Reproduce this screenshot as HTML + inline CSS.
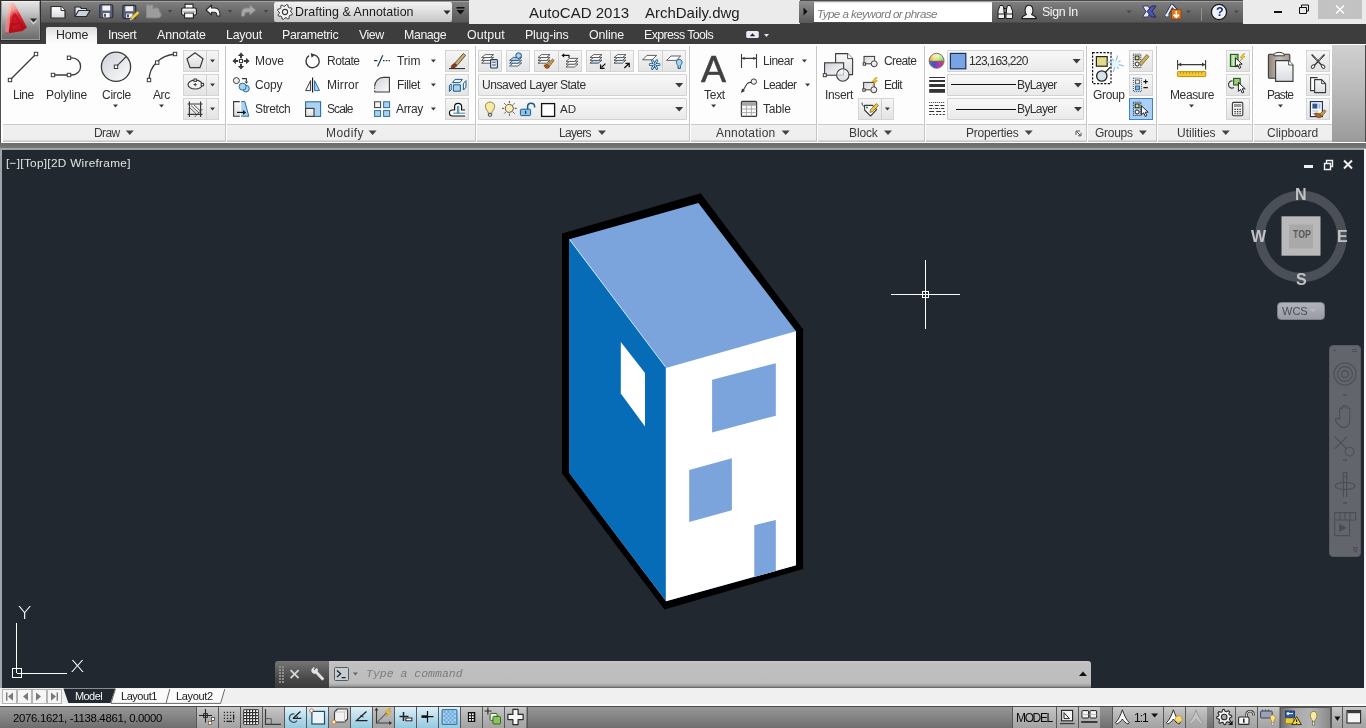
<!DOCTYPE html>
<html lang="en">
<head>
<meta charset="utf-8">
<title>AutoCAD 2013 - ArchDaily.dwg</title>
<style>
*{box-sizing:border-box;margin:0;padding:0}
html,body{width:1366px;height:728px;overflow:hidden;background:#212830}
body{position:relative;font-family:"Liberation Sans",sans-serif;font-size:12px;color:#3c3c3c}
.a{position:absolute}
.t{position:absolute;z-index:3;will-change:transform;white-space:pre;line-height:14px;font-size:12px;color:#3c3c3c}
.w{color:#f2f2f2}
svg{position:absolute;overflow:visible}
/* title bar */
#tb-dark1{left:40px;top:0;width:429px;height:24px;background:linear-gradient(#4a4a4a 0,#4a4a4a 1px,#a0a0a0 1px,#a0a0a0 2px,#7e7e7e 2px,#727272 8px,#646464 15px,#585858 22px,#3e3e3e 23px,#3a3a3a 24px)}
#tb-light1{left:469px;top:0;width:331px;height:24px;background:#ebebeb}
#tb-dark2{left:800px;top:0;width:443px;height:24px;background:linear-gradient(#4a4a4a 0,#4a4a4a 1px,#a0a0a0 1px,#a0a0a0 2px,#7e7e7e 2px,#727272 8px,#646464 15px,#585858 22px,#3e3e3e 23px,#3a3a3a 24px)}
#tb-light2{left:1243px;top:0;width:123px;height:24px;background:#ebebeb}
#appbtn{left:0;top:0;width:41px;height:41px;background:#2e2e2e}
#appbtn i{position:absolute;left:1px;top:1px;width:39px;height:39px;background:linear-gradient(#e4e4e4 0,#c4c4c4 30%,#8e8e8e 65%,#6c6c6c 100%);border:1px solid #9a9a9a;border-top-color:#f0f0f0}
#wsdrop{left:274px;top:2px;width:178px;height:20px;background:linear-gradient(#f2f2f2,#e0e0e0 45%,#c6c6c6);border-radius:2px}
#tb-play{left:799px;top:1px;width:14px;height:22px;background:linear-gradient(#8e8e8e,#5a5a5a)}
#search{left:814px;top:2px;width:178px;height:20px;background:linear-gradient(#e4e4e4 0,#fff 2px)}
#closebtn{left:1318px;top:0;width:44px;height:19px;background:#c2c2c2}
/* tab bar */
#tabs{left:0;top:24px;width:1366px;height:20px;background:#3d3d3d}
#hometab{left:46px;top:27px;width:51px;height:17px;background:linear-gradient(#dcdcdc,#f4f4f4 60%,#fdfdfd);border-radius:2px 2px 0 0}
.tab{top:27px;font-size:12.4px;color:#f4f4f4}
/* ribbon */
#ribbon{left:0;top:44px;width:1366px;height:99px;background:#fdfdfd}
#rib-right{left:1332px;top:45px;width:34px;height:97px;background:linear-gradient(#d0d0d0,#b8b8b8 50%,#9a9a9a);border-right:1.5px solid #484848}
#rib-titles{left:3px;top:124px;width:1329px;height:18px;background:linear-gradient(#cacaca 0,#cacaca 1px,#f0f0f0 1px,#eeeeee 16px,#c4c4c4 17px,#c4c4c4 18px)}
#rib-bottom{left:1px;top:142px;width:1364px;height:1px;background:#fefefe}
#rib-left{left:0;top:44px;width:2px;height:99px;background:linear-gradient(90deg,#505050 0,#505050 1px,#fff 1px)}
#rib-edge{left:0;top:143px;width:1366px;height:7px;background:linear-gradient(#6c6c6a 0,#737371 4px,#7c7c7c 5px,#a2a6aa 5px,#989ca0 7px)}
.sep{position:absolute;top:46px;width:2px;height:96px;background:linear-gradient(90deg,#c6c6c6 0,#c6c6c6 1px,#fff 1px)}
.pt{top:126px;color:#444}
.arr{position:absolute;width:0;height:0;border-left:4px solid transparent;border-right:4px solid transparent;border-top:4px solid #444}
.sarr{position:absolute;width:0;height:0;border-left:3px solid transparent;border-right:3px solid transparent;border-top:3px solid #444}
.btn{position:absolute;background:linear-gradient(#f6f6f6,#ececec 50%,#e4e4e4);border:1px solid #d4d4d4}
.btn.on{background:#abd0f5;border-color:#3f82c8}
.combo{position:absolute;background:linear-gradient(#f8f8f8,#f1f1f1 50%,#eaeaea);border:1px solid #d2d2d2;border-radius:1px}
/* canvas */
#canvas{left:0;top:150px;width:1366px;height:538px;background:#212830}
#canvas-l{left:0;top:150px;width:2px;height:538px;background:#a0a4a8}
#canvas-r{left:1364px;top:149px;width:2px;height:557px;background:#f4f4f4}
/* command line */
#cmd-d{left:275px;top:661px;width:54px;height:27px;background:linear-gradient(#767676 0,#606060 30%,#484848 65%,#3a3a3a);border-radius:3px 0 0 0}
#cmd-l{left:329px;top:661px;width:762px;height:27px;background:linear-gradient(#c8c8c8 0,#c0c0c0 3px,#bdbdbd 22px,#a0a0a0 25px,#5a5a5a 27px);border-radius:0 3px 0 0}
/* layout tabs */
#lay{left:0;top:688px;width:1366px;height:16px;background:#f0f0f0}
#layline{left:0;top:704px;width:1366px;height:2px;background:#fdfdfd}
/* status bar */
#status{left:0;top:706px;width:1366px;height:22px;background:linear-gradient(#4a4a4a 0,#4a4a4a 1px,#969696 1px,#8a8a8a 8px,#7a7a7a 16px,#6e6e6e 22px)}
.sb{position:absolute;top:707px;height:21px;width:21px;background:linear-gradient(#c8c8c8 0,#b6b6b6 40%,#a2a2a2 100%);box-shadow:-1px 0 0 #585858}
.sb.on{background:linear-gradient(#e0f0f8 0,#bfe0ee 40%,#94cadf 100%)}
</style>
</head>
<body>
<!-- ===== title bar ===== -->
<div class="a" id="tb-dark1"></div>
<div class="a" id="tb-light1"></div>
<div class="a" id="tb-dark2"></div>
<div class="a" id="tb-light2"></div>
<div class="a" id="tabs"></div>
<div class="a" id="appbtn"><i></i></div>
<div class="a" id="wsdrop"></div>
<div class="a" id="tb-play"></div>
<div class="a" id="search"></div>
<div class="a" id="closebtn"></div>
<span class="t" style="left:295.00px;top:4.6px;font-size:12.4px;line-height:15px;color:#1a1a1a;letter-spacing:0.07px">Drafting &amp; Annotation</span>
<span class="t" style="left:528.60px;top:3.9px;font-size:15px;line-height:18px;color:#1e1e1e">AutoCAD 2013    ArchDaily.dwg</span>
<span class="t" style="left:817.00px;top:7.0px;font-size:11.6px;line-height:14px;color:#7a7a7a;letter-spacing:-0.55px;font-style:italic">Type a keyword or phrase</span>
<span class="t" style="left:1041.50px;top:5.4px;font-size:12.4px;line-height:15px;color:#f4f4f4;letter-spacing:-0.39px">Sign In</span>
<!-- ===== tabs ===== -->
<div class="a" id="hometab"></div>
<span class="t" style="left:55.60px;top:28.2px;font-size:12.4px;line-height:15px;color:#2a2a2a;letter-spacing:-0.24px">Home</span>
<span class="t" style="left:108.20px;top:28.2px;font-size:12.4px;line-height:15px;color:#f4f4f4;letter-spacing:-0.48px">Insert</span>
<span class="t" style="left:157.00px;top:28.2px;font-size:12.4px;line-height:15px;color:#f4f4f4;letter-spacing:-0.09px">Annotate</span>
<span class="t" style="left:226.40px;top:28.2px;font-size:12.4px;line-height:15px;color:#f4f4f4;letter-spacing:-0.21px">Layout</span>
<span class="t" style="left:282.00px;top:28.2px;font-size:12.4px;line-height:15px;color:#f4f4f4;letter-spacing:-0.37px">Parametric</span>
<span class="t" style="left:359.40px;top:28.2px;font-size:12.4px;line-height:15px;color:#f4f4f4;letter-spacing:-0.49px">View</span>
<span class="t" style="left:404.40px;top:28.2px;font-size:12.4px;line-height:15px;color:#f4f4f4;letter-spacing:-0.41px">Manage</span>
<span class="t" style="left:467.00px;top:28.2px;font-size:12.4px;line-height:15px;color:#f4f4f4;letter-spacing:0.08px">Output</span>
<span class="t" style="left:525.20px;top:28.2px;font-size:12.4px;line-height:15px;color:#f4f4f4;letter-spacing:-0.15px">Plug-ins</span>
<span class="t" style="left:589.20px;top:28.2px;font-size:12.4px;line-height:15px;color:#f4f4f4;letter-spacing:-0.13px">Online</span>
<span class="t" style="left:644.20px;top:28.2px;font-size:12.4px;line-height:15px;color:#f4f4f4;letter-spacing:-0.60px">Express Tools</span>
<!-- title bar icons -->
<svg id="svg-title" style="left:0;top:0" width="1366" height="46" viewBox="0 0 1366 46">
<defs>
<linearGradient id="gW" x1="0" y1="0" x2="0" y2="1"><stop offset="0" stop-color="#fff"/><stop offset="1" stop-color="#d4d8dc"/></linearGradient>
<linearGradient id="gR" x1="0" y1="0" x2="1" y2="1"><stop offset="0" stop-color="#ff9a9a"/><stop offset=".45" stop-color="#e8222a"/><stop offset="1" stop-color="#a00010"/></linearGradient>
</defs>
<defs><linearGradient id="gL" x1="0" y1="0" x2="0.25" y2="1"><stop offset="0" stop-color="#f0d4cc"/><stop offset=".28" stop-color="#ee9a94"/><stop offset=".5" stop-color="#e62a34"/><stop offset="1" stop-color="#b40c1a"/></linearGradient>
<filter id="fB" x="-20%" y="-20%" width="140%" height="140%"><feGaussianBlur stdDeviation=".7"/></filter></defs>
<g filter="url(#fB)">
<path d="M9,3 L14.2,3 L27,27.6 L22.4,31 L7.4,33.6 L5.4,31.4 Z" fill="url(#gL)"/>
<path d="M8.6,2.6 L11.6,2.6 L8.6,33.6 L5,31.6 Z" fill="#f8d0c8" opacity=".55"/>
<path d="M14.4,13.6 L10.6,30.6 M14.4,13.6 L23.4,28.4 M12,24.6 L19.6,23" stroke="#a40816" stroke-width="2.2" fill="none" opacity=".55"/>
<path d="M16,17 L19.6,22.6 L13.6,23.6 Z" fill="#c01828" opacity=".8"/>
</g>
<polygon points="30,20.4 37,20.4 33.5,24.4" fill="#f4f4f4" opacity=".7"/><polygon points="30.0,18.5 37.0,18.5 33.5,22.5" fill="#2a2a2a"/>
<path d="M51,6.5 H61 L65,10.5 V18 H51 Z" fill="url(#gW)" stroke="#2c2c2c" stroke-width="1.2" stroke-linejoin="round"/><path d="M61,6.5 V10.5 H65" fill="#fff" stroke="#2c2c2c" stroke-width="1"/>
<path d="M75,16.5 V7 H80 L81.5,8.5 H86.5 V10.5" fill="#e4e8ec" stroke="#2c2c2c" stroke-width="1.2" stroke-linejoin="round"/><path d="M75,16.5 L78.5,10.5 H90 L86.5,16.5 Z" fill="#c8d2dc" stroke="#2c2c2c" stroke-width="1.2" stroke-linejoin="round"/>
<rect x="99.8" y="4.8" width="13" height="13" rx="1.2" fill="#5a607c" stroke="#2a2c3a" stroke-width="1.1"/><rect x="102.39999999999999" y="5.6" width="7.8" height="5" fill="#f2f2f4"/><rect x="103.2" y="13.0" width="6.4" height="4.4" fill="#f2f2f4"/><rect x="104.2" y="13.8" width="1.6" height="3" fill="#2a2c3a"/>
<rect x="122.8" y="5.4" width="13" height="13" rx="1.2" fill="#5a607c" stroke="#2a2c3a" stroke-width="1.1"/><rect x="125.39999999999999" y="6.2" width="7.8" height="5" fill="#f2f2f4"/><rect x="126.2" y="13.6" width="6.4" height="4.4" fill="#f2f2f4"/><rect x="127.2" y="14.4" width="1.6" height="3" fill="#2a2c3a"/>
<path d="M130.5,17.8 L137.5,11 L139.5,13 L132.6,19.8 Z" fill="#f0d24a" stroke="#8a6a10" stroke-width=".6"/><path d="M130.5,17.8 L129.6,20.6 L132.6,19.8 Z" fill="#f8f0c8" stroke="#555" stroke-width=".5"/>
<path d="M146.5,5 H153 V9 C156,6.5 160,8 159,11.5 C162,13 162,17.5 158,17.8 H146.5 Z" fill="#9c9c9c" stroke="#8a8a8a" stroke-width="1"/>
<polygon points="167.5,10 172.5,10 170,13" fill="#4a4a4a"/>
<rect x="185" y="4.2" width="8" height="4.5" fill="#fafafa" stroke="#222" stroke-width="1.1"/><rect x="181.6" y="8" width="14.8" height="7" rx="1.5" fill="#f4f4f4" stroke="#222" stroke-width="1.2"/><rect x="184.6" y="13" width="8.8" height="5" fill="#fafafa" stroke="#222" stroke-width="1.1"/><rect x="183" y="10.8" width="12" height="1.6" fill="#bbb"/>
<path d="M206,10 L211.5,5 V8 H215 C219,8 220,11 220,16 H217 C217,13.2 216.5,12.2 214,12.2 H211.5 V15 Z" fill="#f6f6f6" stroke="#2a2a2a" stroke-width="1.1" stroke-linejoin="round"/>
<polygon points="227.5,10 232.5,10 230,13" fill="#4a4a4a"/>
<path d="M255.5,10 L250,5 V8 H246.5 C242.5,8 241.5,11 241.5,16 H244.5 C244.5,13.2 245,12.2 247.5,12.2 H250 V15 Z" fill="#a8a8a8" stroke="#8c8c8c" stroke-width="1"/>
<polygon points="263.5,10 268.5,10 266,13" fill="#4a4a4a"/>
<polygon points="292.45,13.48 292.02,14.91 289.82,15.22 289.10,16.10 289.22,18.32 287.91,19.02 286.13,17.69 285.00,17.80 283.52,19.45 282.09,19.02 281.78,16.82 280.90,16.10 278.68,16.22 277.98,14.91 279.31,13.13 279.20,12.00 277.55,10.52 277.98,9.09 280.18,8.78 280.90,7.90 280.78,5.68 282.09,4.98 283.87,6.31 285.00,6.20 286.48,4.55 287.91,4.98 288.22,7.18 289.10,7.90 291.32,7.78 292.02,9.09 290.69,10.87 290.80,12.00" fill="#f4f4f4" stroke="#3a3a3a" stroke-width="1" stroke-linejoin="round"/><circle cx="285" cy="12" r="2.6" fill="none" stroke="#3a3a3a" stroke-width="1.1"/>
<polygon points="443.5,10.5 450.5,10.5 447,14.5" fill="#2a2a2a"/>
<rect x="456.5" y="7" width="8" height="1.6" fill="#111"/><polygon points="456.5,10 464.5,10 460.5,14.5" fill="#111"/>
<polygon points="803.5,7.5 803.5,15.5 807.5,11.5" fill="#111"/>
<g stroke="#1e1e1e" stroke-width="1" fill="#f0f0f0">
<path d="M998,18.5 V11 L1000,5.5 H1003 L1004.5,11 V18.5 Z"/><path d="M1006,18.5 V11 L1007.5,5.5 H1010.5 L1012.5,11 V18.5 Z"/>
<rect x="1004" y="8.5" width="2.4" height="4" fill="#888"/><path d="M998,14 H1004.5 M1006,14 H1012.5" fill="none"/></g>
<path d="M1021.6,18.6 C1022,16 1024,15.6 1026.4,14.6 C1024.4,12.8 1024.2,5.2 1029,5.2 C1033.8,5.2 1033.6,12.8 1031.6,14.6 C1034,15.6 1036,16 1036.4,18.6 Z" fill="#f2f2f2" stroke="#1e1e1e" stroke-width="1.1" stroke-linejoin="round"/>
<polygon points="1126.5,10.5 1131.5,10.5 1129,13.5" fill="#4a4a4a"/>
<path d="M1142.5,6 H1148 L1151,10.5 L1148,17 H1142.5 L1146,11.5 Z" fill="#e8e8f4" stroke="#2a2a66" stroke-width=".9"/><path d="M1156,6 H1151.5 L1147,11.5 L1151.5,17 H1156 L1152,11.5 Z" fill="#4858b0" stroke="#1a2060" stroke-width=".9"/>
<path d="M1166.5,15.5 L1172,5.5 M1172,5.5 L1176,10" stroke="#1e2a55" stroke-width="3.4" stroke-linecap="round" fill="none"/><path d="M1166.5,15.5 L1172,5.5 M1172,5.5 L1176,10" stroke="#e8ecf8" stroke-width="1.8" stroke-linecap="round" fill="none"/><circle cx="1167" cy="15" r="1.6" fill="#e8ecf8"/><rect x="1171.5" y="9.5" width="9.6" height="9.6" rx="1" fill="#e07818" stroke="#8a4408" stroke-width=".9"/><path d="M1176.3,11 V17 M1173.6,14.6 L1176.3,17.4 L1179,14.6" stroke="#fff" stroke-width="1.6" fill="none"/>
<polygon points="1186.0,10.5 1191.0,10.5 1188.5,13.5" fill="#4a4a4a"/>
<rect x="1201" y="8" width="1" height="13" fill="#909090"/>
<circle cx="1219" cy="12" r="7.6" fill="#f0f2fa" stroke="#1a1a1a" stroke-width="1.3"/>
<polygon points="1234.0,10.5 1239.0,10.5 1236.5,13.5" fill="#4a4a4a"/>
<rect x="1274" y="11" width="8" height="2" fill="#111"/>
<path d="M1299.5,7.5 H1306.5 V13.5 H1299.5 Z M1301.5,7.5 V5 H1308.5 V11 H1306.5" fill="none" stroke="#111" stroke-width="1"/>
<path d="M1336,5.5 L1344,13.5 M1344,5.5 L1336,13.5" stroke="#fff" stroke-width="1.4"/>
<rect x="746.2" y="31" width="12.6" height="7" rx="1.6" fill="#ececf4"/><polygon points="749.8,36.2 755.2,36.2 752.5,33.2" fill="#222"/><polygon points="764.0,34 769.0,34 766.5,37" fill="#e8e8e8"/>
</svg>
<span class="t" style="left:1215.60px;top:4.8px;font-size:12.5px;line-height:15px;color:#1a2a80;font-weight:bold">?</span>
<!-- ===== ribbon background ===== -->
<div class="a" id="ribbon"></div>
<div class="a" id="rib-titles"></div>
<div class="a" id="rib-right"></div>
<div class="a" id="rib-bottom"></div>
<div class="a" id="rib-edge"></div>
<div class="a" id="rib-left"></div>
<div class="sep" style="left:225px"></div>
<div class="sep" style="left:475px"></div>
<div class="sep" style="left:689px"></div>
<div class="sep" style="left:816px"></div>
<div class="sep" style="left:924px"></div>
<div class="sep" style="left:1086px"></div>
<div class="sep" style="left:1156px"></div>
<div class="sep" style="left:1252px"></div>
<span class="t" style="left:93.60px;top:125.8px;font-size:12px;line-height:14px;color:#3a3a3a;letter-spacing:-0.61px">Draw</span>
<span class="t" style="left:325.50px;top:125.8px;font-size:12px;line-height:14px;color:#3a3a3a;letter-spacing:0.45px">Modify</span>
<span class="t" style="left:559.30px;top:125.8px;font-size:12px;line-height:14px;color:#3a3a3a;letter-spacing:-0.68px">Layers</span>
<span class="t" style="left:716.20px;top:125.8px;font-size:12px;line-height:14px;color:#3a3a3a;letter-spacing:0.20px">Annotation</span>
<span class="t" style="left:849.30px;top:125.8px;font-size:12px;line-height:14px;color:#3a3a3a;letter-spacing:-0.12px">Block</span>
<span class="t" style="left:966.40px;top:125.8px;font-size:12px;line-height:14px;color:#3a3a3a;letter-spacing:-0.22px">Properties</span>
<span class="t" style="left:1095.30px;top:125.8px;font-size:12px;line-height:14px;color:#3a3a3a;letter-spacing:-0.27px">Groups</span>
<span class="t" style="left:1177.20px;top:125.8px;font-size:12px;line-height:14px;color:#3a3a3a;letter-spacing:-0.01px">Utilities</span>
<span class="t" style="left:1266.60px;top:125.8px;font-size:12px;line-height:14px;color:#3a3a3a;letter-spacing:-0.03px">Clipboard</span>
<div class="btn" style="left:183px;top:50px;width:36px;height:22px"></div>
<div class="a" style="left:206px;top:51px;width:1px;height:20px;background:#d0d0d0"></div>
<div class="btn" style="left:183px;top:74px;width:36px;height:22px"></div>
<div class="a" style="left:206px;top:75px;width:1px;height:20px;background:#d0d0d0"></div>
<div class="btn" style="left:183px;top:98px;width:36px;height:22px"></div>
<div class="a" style="left:206px;top:99px;width:1px;height:20px;background:#d0d0d0"></div>
<span class="t" style="left:12.80px;top:87.8px;font-size:12px;line-height:14px;color:#303030;letter-spacing:-0.49px">Line</span>
<span class="t" style="left:45.80px;top:87.8px;font-size:12px;line-height:14px;color:#303030;letter-spacing:-0.11px">Polyline</span>
<span class="t" style="left:101.80px;top:87.8px;font-size:12px;line-height:14px;color:#303030;letter-spacing:-0.29px">Circle</span>
<span class="t" style="left:153.40px;top:87.8px;font-size:12px;line-height:14px;color:#303030;letter-spacing:-0.40px">Arc</span>
<span class="t" style="left:255.00px;top:53.6px;font-size:12px;line-height:14px;color:#303030;letter-spacing:-0.11px">Move</span>
<span class="t" style="left:254.80px;top:77.6px;font-size:12px;line-height:14px;color:#303030;letter-spacing:-0.21px">Copy</span>
<span class="t" style="left:254.80px;top:101.6px;font-size:12px;line-height:14px;color:#303030;letter-spacing:-0.37px">Stretch</span>
<span class="t" style="left:327.00px;top:53.6px;font-size:12px;line-height:14px;color:#303030;letter-spacing:-0.47px">Rotate</span>
<span class="t" style="left:327.00px;top:77.6px;font-size:12px;line-height:14px;color:#303030;letter-spacing:0.10px">Mirror</span>
<span class="t" style="left:326.60px;top:101.6px;font-size:12px;line-height:14px;color:#303030;letter-spacing:-0.90px">Scale</span>
<span class="t" style="left:396.80px;top:53.6px;font-size:12px;line-height:14px;color:#303030;letter-spacing:-0.04px">Trim</span>
<span class="t" style="left:397.20px;top:77.6px;font-size:12px;line-height:14px;color:#303030;letter-spacing:-0.38px">Fillet</span>
<span class="t" style="left:395.60px;top:101.6px;font-size:12px;line-height:14px;color:#303030;letter-spacing:-0.37px">Array</span>
<div class="btn" style="left:445px;top:50px;width:24px;height:22px"></div>
<div class="btn" style="left:445px;top:74px;width:24px;height:22px"></div>
<div class="btn" style="left:445px;top:98px;width:24px;height:22px"></div>
<div class="btn" style="left:478px;top:50px;width:24px;height:22px"></div>
<div class="btn" style="left:506px;top:50px;width:24px;height:22px"></div>
<div class="btn" style="left:534px;top:50px;width:48px;height:22px"></div>
<div class="a" style="left:558px;top:51px;width:1px;height:20px;background:#d0d0d0"></div>
<div class="btn" style="left:586px;top:50px;width:48px;height:22px"></div>
<div class="a" style="left:610px;top:51px;width:1px;height:20px;background:#d0d0d0"></div>
<div class="btn" style="left:638px;top:50px;width:48px;height:22px"></div>
<div class="a" style="left:662px;top:51px;width:1px;height:20px;background:#d0d0d0"></div>
<div class="combo" style="left:478px;top:74px;width:209px;height:22px"></div>
<div class="combo" style="left:478px;top:98px;width:209px;height:22px"></div>
<span class="t" style="left:481.80px;top:77.6px;font-size:12px;line-height:14px;color:#303030;letter-spacing:-0.44px">Unsaved Layer State</span>
<span class="t" style="left:560.40px;top:101.8px;font-size:11.6px;line-height:14px;color:#303030">AD</span>
<span class="t" style="left:701.20px;top:46.5px;font-size:37.6px;line-height:45px;color:#404040;-webkit-text-stroke:0.5px #404040">A</span>
<span class="t" style="left:703.80px;top:87.8px;font-size:12px;line-height:14px;color:#303030;letter-spacing:-0.27px">Text</span>
<span class="t" style="left:762.80px;top:53.6px;font-size:12px;line-height:14px;color:#303030;letter-spacing:-0.47px">Linear</span>
<span class="t" style="left:762.80px;top:77.6px;font-size:12px;line-height:14px;color:#303030;letter-spacing:-0.68px">Leader</span>
<span class="t" style="left:763.00px;top:101.6px;font-size:12px;line-height:14px;color:#303030;letter-spacing:-0.17px">Table</span>
<span class="t" style="left:824.80px;top:87.8px;font-size:12px;line-height:14px;color:#303030;letter-spacing:-0.36px">Insert</span>
<span class="t" style="left:884.00px;top:53.6px;font-size:12px;line-height:14px;color:#303030;letter-spacing:-0.60px">Create</span>
<span class="t" style="left:884.20px;top:77.6px;font-size:12px;line-height:14px;color:#303030;letter-spacing:-0.70px">Edit</span>
<div class="btn" style="left:858px;top:98px;width:36px;height:22px"></div>
<div class="a" style="left:881px;top:99px;width:1px;height:20px;background:#d0d0d0"></div>
<div class="combo" style="left:947px;top:50px;width:137px;height:22px"></div>
<div class="combo" style="left:947px;top:74px;width:137px;height:22px"></div>
<div class="combo" style="left:947px;top:98px;width:137px;height:22px"></div>
<span class="t" style="left:968.60px;top:53.6px;font-size:12px;line-height:14px;color:#303030;letter-spacing:-0.73px">123,163,220</span>
<span class="t" style="left:1017.20px;top:77.6px;font-size:12px;line-height:14px;color:#303030;letter-spacing:-0.61px">ByLayer</span>
<span class="t" style="left:1017.20px;top:101.6px;font-size:12px;line-height:14px;color:#303030;letter-spacing:-0.61px">ByLayer</span>
<span class="t" style="left:1092.80px;top:87.8px;font-size:12px;line-height:14px;color:#303030;letter-spacing:-0.34px">Group</span>
<div class="btn" style="left:1129px;top:50px;width:24px;height:22px"></div>
<div class="btn" style="left:1129px;top:74px;width:24px;height:22px"></div>
<div class="btn on" style="left:1129px;top:98px;width:24px;height:22px"></div>
<span class="t" style="left:1169.80px;top:87.8px;font-size:12px;line-height:14px;color:#303030;letter-spacing:-0.38px">Measure</span>
<div class="btn" style="left:1226px;top:50px;width:24px;height:22px"></div>
<div class="btn" style="left:1226px;top:74px;width:24px;height:22px"></div>
<div class="btn" style="left:1226px;top:98px;width:24px;height:22px"></div>
<span class="t" style="left:1267.00px;top:87.8px;font-size:12px;line-height:14px;color:#303030;letter-spacing:-0.92px">Paste</span>
<div class="btn" style="left:1306px;top:50px;width:24px;height:22px"></div>
<div class="btn" style="left:1306px;top:74px;width:24px;height:22px"></div>
<div class="btn" style="left:1306px;top:98px;width:24px;height:22px"></div>
<svg id="svg-rib" style="left:0;top:0" width="1366" height="150" viewBox="0 0 1366 150">
<polygon points="125.80000000000001,130.6 133.8,130.6 129.8,135.0" fill="#444"/>
<polygon points="368.6,130.6 376.6,130.6 372.6,135.0" fill="#444"/>
<polygon points="598.0,130.6 606.0,130.6 602,135.0" fill="#444"/>
<polygon points="781.7,130.6 789.7,130.6 785.7,135.0" fill="#444"/>
<polygon points="884.0,130.6 892.0,130.6 888,135.0" fill="#444"/>
<polygon points="1024.7,130.6 1032.7,130.6 1028.7,135.0" fill="#444"/>
<polygon points="1138.9,130.6 1146.9,130.6 1142.9,135.0" fill="#444"/>
<polygon points="1221.8,130.6 1229.8,130.6 1225.8,135.0" fill="#444"/>
<polygon points="210.0,59.5 215.0,59.5 212.5,62.5" fill="#3a3a3a"/>
<polygon points="210.0,83.5 215.0,83.5 212.5,86.5" fill="#3a3a3a"/>
<polygon points="210.0,107.5 215.0,107.5 212.5,110.5" fill="#3a3a3a"/>
<polygon points="113.0,104.6 118.0,104.6 115.5,107.6" fill="#3a3a3a"/>
<polygon points="159.0,104.6 164.0,104.6 161.5,107.6" fill="#3a3a3a"/>
<defs><linearGradient id="gG" x1="0" y1="0" x2="0" y2="1"><stop offset="0" stop-color="#fafafa"/><stop offset="1" stop-color="#d9dde2"/></linearGradient><linearGradient id="gG2" x1="0" y1="0" x2="1" y2="1"><stop offset="0" stop-color="#cdd1d8"/><stop offset="1" stop-color="#fdfdfd"/></linearGradient></defs>
<path d="M10,80 L36,54" stroke="#3a3a3a" stroke-width="1.3" fill="none"/><rect x="8.3" y="78.3" width="3.4" height="3.4" fill="#fff" stroke="#3a3a3a" stroke-width="1"/><rect x="34.3" y="52.3" width="3.4" height="3.4" fill="#fff" stroke="#3a3a3a" stroke-width="1"/>
<path d="M53,75 H69 M69,57.8 H72 A8.6,8.6 0 0 1 72,75 H69" stroke="#3a3a3a" stroke-width="1.3" fill="none"/><rect x="51.3" y="73.3" width="3.4" height="3.4" fill="#fff" stroke="#3a3a3a" stroke-width="1"/><rect x="67.3" y="73.3" width="3.4" height="3.4" fill="#fff" stroke="#3a3a3a" stroke-width="1"/><rect x="67.3" y="56.099999999999994" width="3.4" height="3.4" fill="#fff" stroke="#3a3a3a" stroke-width="1"/>
<circle cx="116" cy="66.8" r="14.6" fill="url(#gG2)" stroke="#3a3a3a" stroke-width="1.3"/><path d="M116,66.8 L126.3,56.5" stroke="#3a3a3a" stroke-width="1.1"/><rect x="114.3" y="65.1" width="3.4" height="3.4" fill="#fff" stroke="#3a3a3a" stroke-width="1"/>
<path d="M149,80 C149.5,66 160,55.5 175,54" stroke="#3a3a3a" stroke-width="1.3" fill="none"/><rect x="147.3" y="78.3" width="3.4" height="3.4" fill="#fff" stroke="#3a3a3a" stroke-width="1"/><rect x="155.5" y="60.9" width="3.4" height="3.4" fill="#fff" stroke="#3a3a3a" stroke-width="1"/><rect x="173.3" y="52.3" width="3.4" height="3.4" fill="#fff" stroke="#3a3a3a" stroke-width="1"/>
<path d="M195,52.8 L203,58.8 L200,67.6 H190 L187,58.8 Z" fill="url(#gG)" stroke="#3a3a3a" stroke-width="1.2" stroke-linejoin="round"/>
<ellipse cx="195.2" cy="84.6" rx="7.2" ry="4.4" fill="#f4f4f4" stroke="#3a3a3a" stroke-width="1.2"/><rect x="194.0" y="79.0" width="2.4" height="2.4" fill="#fff" stroke="#3a3a3a" stroke-width="1"/><rect x="201.20000000000002" y="83.39999999999999" width="2.4" height="2.4" fill="#fff" stroke="#3a3a3a" stroke-width="1"/><path d="M193.6,84.6 h3.2 M195.2,83 v3.2" stroke="#3a3a3a" stroke-width="1"/>
<g stroke="#3a3a3a" fill="none"><path d="M187.5,104 H202.5 M187.5,114.4 H202.5 M189.4,101.4 V117 M200.6,101.4 V117" stroke-width="1.2"/><path d="M191,105.5 L199,113 M194,105 L200,110.6 M190,108 L196,113.6 M202.6,109 L194.6,117" stroke-width=".8"/></g>
<polygon points="430.9,59.6 435.9,59.6 433.4,62.6" fill="#3a3a3a"/>
<polygon points="430.9,83.6 435.9,83.6 433.4,86.6" fill="#3a3a3a"/>
<polygon points="430.9,107.6 435.9,107.6 433.4,110.6" fill="#3a3a3a"/>
<g fill="#3a3a3a" stroke="none"><path d="M241,52.4 l3.2,3.6 h-2.2 v2.2 h-2 v-2.2 h-2.2 z M241,69.6 l3.2,-3.6 h-2.2 v-2.2 h-2 v2.2 h-2.2 z M232.4,61 l3.6,-3.2 v2.2 h2.2 v2 h-2.2 v2.2 z M249.6,61 l-3.6,-3.2 v2.2 h-2.2 v2 h2.2 v2.2 z"/></g><rect x="239.5" y="59.5" width="3" height="3" fill="#fff" stroke="#3a3a3a" stroke-width="1"/>
<circle cx="236.4" cy="80.6" r="3" fill="#f0f0f0" stroke="#3a3a3a" stroke-width="1"/><path d="M242,78.6 h4.4 v3" stroke="#3a3a3a" stroke-width="1.1" fill="none"/><path d="M244.6,81.4 h3.6 l-1.8,2.4 z" fill="#3a3a3a"/><circle cx="246" cy="88.6" r="3.3" fill="#a9d3f0" stroke="#2b6f9e" stroke-width="1"/><circle cx="242.6" cy="86.6" r="3.5" fill="#a9d3f0" stroke="#2b6f9e" stroke-width="1"/>
<path d="M241.2,101.6 H244.8 L248.8,116.2 H241.2" fill="#a9d3f0" stroke="#2b6f9e" stroke-width="1"/><path d="M239.8,101.6 H233.6 V116.2 H239.8" fill="url(#gG)" stroke="#3a3a3a" stroke-width="1.1"/><path d="M237,112.4 H243.4" stroke="#111" stroke-width="1.2"/><path d="M243,110 l3.2,2.4 l-3.2,2.4 z" fill="#111"/>
<path d="M314.4,54.8 A6.6,6.6 0 1 1 309,55.6" fill="none" stroke="#3a3a3a" stroke-width="1.4"/><path d="M310.6,53 l4.6,1.8 l-3.6,3 z" fill="#3a3a3a"/>
<path d="M310.6,80.6 V90.6 H305.6 Z" fill="#f8f8f8" stroke="#3a3a3a" stroke-width="1"/><path d="M314.6,80.6 V90.6 H319.6 Z" fill="#a9d3f0" stroke="#2b6f9e" stroke-width="1"/><path d="M312.6,77.4 V92.6" stroke="#111" stroke-width="1.1"/>
<rect x="305.6" y="101.8" width="15" height="14.6" fill="#a9d3f0" stroke="#2b6f9e" stroke-width="1.1"/><rect x="305.6" y="108.4" width="8.4" height="8" fill="url(#gG)" stroke="#3a3a3a" stroke-width="1.1"/>
<path d="M374,60.6 h3.4 M383,60.6 h1.6 M385.8,60.6 h1.6 M388.6,60.6 h1.4" stroke="#1f3e5c" stroke-width="1.1"/><path d="M377.6,66.6 L382.8,55.2" stroke="#1f3e5c" stroke-width="1.2"/>
<path d="M374.6,86 A9,9 0 0 1 383.6,77.4 H389.4 V92 H374.6 Z" fill="url(#gG2)" stroke="none"/><path d="M374.6,86.4 A9,9 0 0 1 383.6,77.4 H389.4 V92 H374.6" fill="none" stroke="#3a3a3a" stroke-width="1.1"/><path d="M374.6,92 V90.4 M374.6,88.8 V87.4" stroke="#3a3a3a" stroke-width="1.1"/>
<rect x="374.6" y="101.8" width="6" height="5.8" fill="#f4f2f4" stroke="#3a3a3a" stroke-width="1"/><rect x="383.6" y="101.8" width="6" height="5.8" fill="#a9d3f0" stroke="#2b6f9e" stroke-width="1"/><rect x="374.6" y="110.6" width="6" height="5.8" fill="#a9d3f0" stroke="#2b6f9e" stroke-width="1"/><rect x="383.6" y="110.6" width="6" height="5.8" fill="#a9d3f0" stroke="#2b6f9e" stroke-width="1"/>
<path d="M449,68.6 H465" stroke="#222" stroke-width="1"/><path d="M454.6,63.4 L463.4,53.4 L465.6,55.4 L457,65.6 Z" fill="#c8ac74" stroke="#4a3a20" stroke-width=".8"/><path d="M454.6,63.4 L457,65.6 C455.4,67.6 452.6,68.4 451.4,67.6 C450.8,66.4 452,64.4 454.6,63.4 Z" fill="#8a3c18" stroke="#4a200c" stroke-width=".7"/>
<g fill="#eaf4fb" stroke="#1c5c8c" stroke-width="1" stroke-linejoin="round"><path d="M452.4,82.6 l2.6,-3.2 h7.4 l-2.6,3.2 z"/><path d="M463.4,83.4 l2.6,-2.8 v6.6 l-2.6,2.8 z"/><path d="M449.4,85.4 l1.8,-1.4 v6 l-1.8,1.4 z"/><rect x="453.4" y="84.8" width="7" height="6.4" fill="#a9d3f0"/></g>
<path d="M465,116 H452.6 C448.4,116 448.4,110 452.6,110 H454.6 V106.8 C454.6,102.2 461.6,102.2 461.6,106.8 V110 H465" fill="#fff" stroke="#111" stroke-width="1.2"/><path d="M465,113.2 H453.2 M457.4,113 V107 C457.4,105.8 458.8,105.8 458.8,107 V113" fill="none" stroke="#2b6f9e" stroke-width=".9"/>
<polygon points="675.2,83 683.2,83 679.2,87.4" fill="#3a3a3a"/>
<polygon points="675.2,107 683.2,107 679.2,111.4" fill="#3a3a3a"/>
<path d="M481.6,63.2 l3.6,-3 h8.4 l-3.6,3 z" fill="#fff" stroke="#444" stroke-width="0.85" stroke-linejoin="round"/><path d="M481.6,60.4 l3.6,-3 h8.4 l-3.6,3 z" fill="#fff" stroke="#444" stroke-width="0.85" stroke-linejoin="round"/><path d="M481.6,57.6 l3.6,-3 h8.4 l-3.6,3 z" fill="#fff" stroke="#444" stroke-width="0.85" stroke-linejoin="round"/><rect x="490.6" y="59.6" width="6.8" height="8.4" rx="1" fill="#e8eef6" stroke="#22365a" stroke-width="1.1"/><path d="M492.2,62.2 h3.6 M492.2,65 h3.6" stroke="#22365a" stroke-width=".9"/>
<path d="M509.6,66.0 l3.6,-3 h8.4 l-3.6,3 z" fill="#fff" stroke="#2a4a66" stroke-width="0.85" stroke-linejoin="round"/><path d="M509.6,63.199999999999996 l3.6,-3 h8.4 l-3.6,3 z" fill="#d6eaf8" stroke="#2a4a66" stroke-width="0.85" stroke-linejoin="round"/><path d="M509.6,60.4 l3.6,-3 h8.4 l-3.6,3 z" fill="#a9d3f0" stroke="#2a4a66" stroke-width="0.85" stroke-linejoin="round"/><circle cx="518.6" cy="55.6" r="2.8" fill="#a9d3f0" stroke="#1c4c74" stroke-width="1"/>
<path d="M538,63.2 l3.6,-3 h8.4 l-3.6,3 z" fill="#fff" stroke="#444" stroke-width="0.85" stroke-linejoin="round"/><path d="M538,60.4 l3.6,-3 h8.4 l-3.6,3 z" fill="#fff" stroke="#444" stroke-width="0.85" stroke-linejoin="round"/><path d="M538,57.6 l3.6,-3 h8.4 l-3.6,3 z" fill="#fff" stroke="#444" stroke-width="0.85" stroke-linejoin="round"/><path d="M546.6,64.8 L552.6,59 L554,60.6 L549,67 Z" fill="#c89a4c" stroke="#6a4414" stroke-width=".7"/><path d="M544,65.4 C546,64 548.6,64.4 549.4,67 C548,69.2 545,68.6 544,65.4 Z" fill="#a85a1c" stroke="#5a2a0c" stroke-width=".6"/>
<path d="M566,67.0 l3.6,-3 h8.4 l-3.6,3 z" fill="#fff" stroke="#444" stroke-width="0.85" stroke-linejoin="round"/><path d="M566,64.19999999999999 l3.6,-3 h8.4 l-3.6,3 z" fill="#fff" stroke="#444" stroke-width="0.85" stroke-linejoin="round"/><path d="M566,61.4 l3.6,-3 h8.4 l-3.6,3 z" fill="#fff" stroke="#444" stroke-width="0.85" stroke-linejoin="round"/><path d="M563.6,55.4 h5.4 v2.6" fill="none" stroke="#111" stroke-width="1.1"/><path d="M561.4,55.4 l2.8,-2.2 v4.4 z" fill="#111"/>
<path d="M590,63.2 l3.6,-3 h8.4 l-3.6,3 z" fill="#a9d3f0" stroke="#444" stroke-width="0.85" stroke-linejoin="round"/><path d="M590,60.4 l3.6,-3 h8.4 l-3.6,3 z" fill="#fff" stroke="#444" stroke-width="0.85" stroke-linejoin="round"/><path d="M590,57.6 l3.6,-3 h8.4 l-3.6,3 z" fill="#fff" stroke="#444" stroke-width="0.85" stroke-linejoin="round"/><path d="M605.4,63.6 L601.6,67.4 M600.6,64.4 V68.4 H604.6" stroke="#111" stroke-width="1.3" fill="none"/>
<path d="M614,63.2 l3.6,-3 h8.4 l-3.6,3 z" fill="#d6eaf8" stroke="#444" stroke-width="0.85" stroke-linejoin="round"/><path d="M614,60.4 l3.6,-3 h8.4 l-3.6,3 z" fill="#eef6fc" stroke="#444" stroke-width="0.85" stroke-linejoin="round"/><path d="M614,57.6 l3.6,-3 h8.4 l-3.6,3 z" fill="#fff" stroke="#444" stroke-width="0.85" stroke-linejoin="round"/><path d="M624.4,68 L628.4,64 M625.4,63.4 H629.2 V67.2" stroke="#111" stroke-width="1.3" fill="none"/>
<path d="M642.6,59.8 l4.4,-4.4 h9.6 l-4.4,4.4 z" fill="#fff" stroke="#444" stroke-width="0.85" stroke-linejoin="round"/><path d="M655.8,64.6 L659.2,64.6 M655.2,65.6 L656.9,68.6 M654.0,65.6 L652.3,68.6 M653.4,64.6 L650.0,64.6 M654.0,63.6 L652.3,60.6 M655.2,63.6 L656.9,60.6 " stroke="#1c5c8c" stroke-width="2.6" stroke-linecap="round" fill="none"/><path d="M655.8,64.6 L659.2,64.6 M655.2,65.6 L656.9,68.6 M654.0,65.6 L652.3,68.6 M653.4,64.6 L650.0,64.6 M654.0,63.6 L652.3,60.6 M655.2,63.6 L656.9,60.6 " stroke="#e6f4fc" stroke-width="1" stroke-linecap="round" fill="none"/>
<path d="M666.6,60.4 l4.4,-4.4 h9.6 l-4.4,4.4 z" fill="#fff" stroke="#444" stroke-width="0.85" stroke-linejoin="round"/><path d="M678,68.4 V65.4 C675.4,63.4 676,59.4 679.2,59.4 C682.4,59.4 683,63.4 680.4,65.4 V68.4 Z" fill="#a9d3f0" stroke="#1c5c8c" stroke-width="1"/>
<path d="M488.4,113.4 C488,110.6 485.4,109.6 485.4,106.4 C485.4,103.6 487.6,102 490,102 C492.4,102 494.6,103.6 494.6,106.4 C494.6,109.6 492,110.6 491.6,113.4 Z" fill="#f6eaa6" stroke="#8a7a3a" stroke-width=".9"/><rect x="488.4" y="113.4" width="3.2" height="2.8" rx=".8" fill="#ddd" stroke="#333" stroke-width=".9"/>
<circle cx="509.4" cy="108.4" r="4" fill="#f8efb8" stroke="#55503a" stroke-width=".9"/><path d="M514.6,108.4 L516.8,108.4 M513.1,112.1 L514.6,113.6 M509.4,113.6 L509.4,115.8 M505.7,112.1 L504.2,113.6 M504.2,108.4 L502.0,108.4 M505.7,104.7 L504.2,103.2 M509.4,103.2 L509.4,101.0 M513.1,104.7 L514.6,103.2 " stroke="#444" stroke-width=".9"/>
<path d="M527.6,109.4 V106.6 C527.6,102 534.6,102 534.6,106.6 V107.6" fill="none" stroke="#1c5c8c" stroke-width="1.5"/><rect x="520.4" y="109.2" width="10.2" height="6.4" rx="1" fill="#8cc4ec" stroke="#1c5c8c" stroke-width="1"/><rect x="525" y="110.8" width="1.2" height="3.2" fill="#123c5c"/>
<rect x="541.6" y="103.6" width="13" height="12.8" fill="#fff" stroke="#111" stroke-width="1.3"/>
<polygon points="711.1,104.6 716.1,104.6 713.6,107.6" fill="#3a3a3a"/>
<polygon points="801.9,59.6 806.9,59.6 804.4,62.6" fill="#3a3a3a"/>
<polygon points="805.1,83.6 810.1,83.6 807.6,86.6" fill="#3a3a3a"/>
<path d="M741.5,54 V68 M756.5,54 V68 M741.5,58.4 H756.5" stroke="#3a3a3a" stroke-width="1.1" fill="none"/><path d="M742,58.4 l2.6,-1.6 v3.2 z M756,58.4 l-2.6,-1.6 v3.2 z" fill="#3a3a3a"/>
<circle cx="753.8" cy="81.6" r="2.7" fill="#eee" stroke="#3a3a3a" stroke-width="1"/><path d="M751.2,82.4 C746,82 746.6,86 742.4,91.4" fill="none" stroke="#3a3a3a" stroke-width="1.1"/><path d="M741,93 l1,-4.4 l3,2.4 z" fill="#3a3a3a"/>
<rect x="741.4" y="101.4" width="15.2" height="15" rx="1" fill="#fbfbfb" stroke="#3a3a3a" stroke-width="1.2"/><rect x="742" y="102" width="14" height="3" fill="#a8a8a8"/><path d="M741.4,105.4 H756.6 M741.4,109 H756.6 M741.4,112.6 H756.6 M746.4,105.4 V116.4 M751.4,105.4 V116.4" stroke="#9a9a9a" stroke-width=".8"/>
<polygon points="884.9,107.5 889.9,107.5 887.4,110.5" fill="#3a3a3a"/>
<path d="M835.6,53.6 H847.6 L852.6,58.6 V74.6 H835.6 Z" fill="url(#gG)" stroke="#3a3a3a" stroke-width="1.1" stroke-linejoin="round"/><path d="M847.6,53.6 V58.6 H852.6" fill="#fff" stroke="#3a3a3a" stroke-width=".9"/><rect x="824.6" y="62.8" width="19" height="12.4" fill="url(#gG2)" stroke="#3a3a3a" stroke-width="1.1"/><circle cx="842.8" cy="75" r="6.2" fill="url(#gG)" stroke="#3a3a3a" stroke-width="1.1"/><path d="M843.6,68.8 V75.2 H836.6" stroke="#aaa" stroke-width=".8" fill="none"/><rect x="823.3" y="73.7" width="3" height="3" fill="#fff" stroke="#3a3a3a" stroke-width="1"/>
<rect x="864" y="56.4" width="10.6" height="7.4" fill="url(#gG2)" stroke="#3a3a3a" stroke-width="1"/><circle cx="874.2" cy="63.8" r="3" fill="url(#gG)" stroke="#3a3a3a" stroke-width="1"/><rect x="863.1999999999999" y="62.8" width="2.4" height="2.4" fill="#fff" stroke="#3a3a3a" stroke-width="1"/>
<rect x="863.6" y="82.4" width="10.6" height="7.4" fill="url(#gG2)" stroke="#3a3a3a" stroke-width="1"/><circle cx="873.8000000000001" cy="89.80000000000001" r="3" fill="url(#gG)" stroke="#3a3a3a" stroke-width="1"/><rect x="862.8" y="88.8" width="2.4" height="2.4" fill="#fff" stroke="#3a3a3a" stroke-width="1"/><path d="M875.4,77.6 L872,81.6 h2.6 L872.6,85.6 L877.6,80.6 h-2.6 l2.2,-3 z" fill="#f6c432" stroke="#b8860c" stroke-width=".5"/>
<path d="M862,102.6 C862,106 864,106.6 866.4,106.6" fill="none" stroke="#1c3c5c" stroke-width="1"/><path d="M864.6,105.4 H872.6 L876.6,109.6 L870.6,116 L864.6,110 Z" fill="#fff" stroke="#3a3a3a" stroke-width="1.1" stroke-linejoin="round"/><circle cx="867" cy="107.6" r="1" fill="#2b6f9e"/><path d="M870.4,109.8 L876.4,103.6 L878.4,105.6 L872.4,111.8 L870,112.4 Z" fill="#f0c840" stroke="#6a5410" stroke-width=".7"/>
<polygon points="1072.6,59 1080.6,59 1076.6,63.4" fill="#3a3a3a"/>
<polygon points="1074.0,83 1082.0,83 1078,87.4" fill="#3a3a3a"/>
<polygon points="1074.0,107 1082.0,107 1078,111.4" fill="#3a3a3a"/>
<rect x="950.4" y="53.4" width="15.4" height="15.4" fill="#78a5e2" stroke="#16306a" stroke-width="1.2"/>
<path d="M951,84.5 H1015.6 M956,109.5 H1015.6" stroke="#111" stroke-width="1" shape-rendering="crispEdges"/>
<defs><clipPath id="cw"><circle cx="936.6" cy="60.8" r="7.4"/></clipPath><linearGradient id="cwT" x1="0" y1="0" x2="1" y2="0"><stop offset="0" stop-color="#e88a48"/><stop offset=".3" stop-color="#f0d848"/><stop offset=".6" stop-color="#b8e060"/><stop offset="1" stop-color="#58c878"/></linearGradient><linearGradient id="cwB" x1="0" y1="0" x2="1" y2="0"><stop offset="0" stop-color="#2878d8"/><stop offset=".35" stop-color="#5848c8"/><stop offset=".65" stop-color="#b838b0"/><stop offset="1" stop-color="#e83838"/></linearGradient><radialGradient id="cwg" cx=".5" cy=".35" r=".6"><stop offset="0" stop-color="#fff" stop-opacity=".7"/><stop offset="1" stop-color="#fff" stop-opacity="0"/></radialGradient></defs>
<g clip-path="url(#cw)"><rect x="929" y="53" width="16" height="8.4" fill="url(#cwT)"/><rect x="929" y="61.4" width="16" height="8" fill="url(#cwB)"/><rect x="929" y="53" width="16" height="8.4" fill="url(#cwg)"/><rect x="929" y="60.8" width="16" height="1" fill="#333" opacity=".55"/></g><circle cx="936.6" cy="60.8" r="7.5" fill="none" stroke="#6a6a6a" stroke-width=".9"/>
<g fill="#333"><rect x="929.2" y="77" width="15.8" height="1"/><rect x="929.2" y="80" width="15.8" height="2"/><rect x="929.2" y="84" width="15.8" height="3"/><rect x="929.2" y="89" width="15.8" height="3.8"/></g>
<g stroke="#333" stroke-width="1" fill="none"><path d="M929.2,102.5 H945" stroke-dasharray="1 1"/><path d="M929.2,105.5 H945" stroke-dasharray="4 1.6"/><path d="M929.2,108.5 H945" stroke-dasharray="3 1 1 1"/><path d="M929.2,111.5 H945" stroke-dasharray="5 2"/><path d="M929.2,114.5 H945" stroke-dasharray="2 1.4"/></g>
<path d="M1076,131 h4 M1076,131 v4 M1076.6,131.6 L1080.6,135.6 M1078,135.8 h3 v-3" stroke="#555" stroke-width="1" fill="none"/>
<rect x="1092.6" y="52.6" width="18.4" height="31" fill="none" stroke="#111" stroke-width="1.2" stroke-dasharray="2.2 1.4"/><rect x="1096.4" y="56.6" width="10.8" height="9.6" fill="#e2dc86" stroke="#222" stroke-width="1.2"/><path d="M1105.6,72 L1110.4,67.2" stroke="#222" stroke-width="1.2"/><circle cx="1101.8" cy="76" r="5.2" fill="#d6e2ec" stroke="#222" stroke-width="1.3"/>
<path d="M1115.4,63.8 L1123.7,65.9 M1115.4,63.8 L1118.5,69.0 M1115.4,63.8 L1113.3,72.1 M1115.4,63.8 L1110.2,66.9 M1115.4,63.8 L1107.1,61.7 M1115.4,63.8 L1112.3,58.6 M1115.4,63.8 L1117.5,55.5 M1115.4,63.8 L1120.6,60.7 " stroke="#8cc0e4" stroke-width="1.3" fill="none" opacity=".9"/><circle cx="1115.4" cy="63.8" r="3.4" fill="#e8f4fc"/>
<rect x="1133.4" y="54.2" width="7.4" height="13.4" fill="none" stroke="#111" stroke-width=".9" stroke-dasharray="1 1"/><rect x="1135.2" y="56.0" width="3.8" height="3.8" fill="#e2dc86" stroke="#111" stroke-width=".9"/><circle cx="1137.1000000000001" cy="64.0" r="2" fill="#fff" stroke="#111" stroke-width=".9"/><path d="M1139,63.6 L1146.6,54.6 L1149,56.6 L1141.4,65.4 Z" fill="#c8b060" stroke="#6a5a20" stroke-width=".7"/>
<rect x="1133.4" y="78.2" width="8" height="13.4" fill="none" stroke="#1c3c6c" stroke-width=".9" stroke-dasharray="1 1"/><rect x="1135.4" y="80" width="4" height="3.8" fill="#e8eef4" stroke="#555" stroke-width=".9"/><rect x="1135.4" y="86" width="4" height="3.8" fill="#7ab4e4" stroke="#1c5c8c" stroke-width=".9"/><path d="M1143.4,81.6 h4.4 M1145.6,79.4 v4.4 M1143.4,87.6 h4.4" stroke="#111" stroke-width="1.1"/>
<rect x="1133.4" y="102.2" width="7.4" height="13.4" fill="none" stroke="#111" stroke-width=".9" stroke-dasharray="1 1"/><rect x="1135.2" y="104.0" width="3.8" height="3.8" fill="#e2dc86" stroke="#111" stroke-width=".9"/><circle cx="1137.1000000000001" cy="112.0" r="2" fill="#fff" stroke="#111" stroke-width=".9"/><path d="M1141.4,105.8 v9 l2.2,-2 l1.6,3.6 l1.6,-0.8 l-1.6,-3.4 h3 z" fill="#fff" stroke="#111" stroke-width=".9" stroke-linejoin="round"/>
<polygon points="1189.0,104.6 1194.0,104.6 1191.5,107.6" fill="#3a3a3a"/>
<path d="M1177.6,60 V69.4 M1205.6,60 V69.4 M1178,64.6 H1205" stroke="#3a3a3a" stroke-width="1.1" fill="none"/><path d="M1178.2,64.6 l3,-2 v4 z M1205,64.6 l-3,-2 v4 z" fill="#3a3a3a"/><rect x="1177.4" y="71.6" width="28.4" height="5" rx=".8" fill="#f6c830" stroke="#c0900c" stroke-width="1"/><path d="M1180.6,72 v1.6 M1183.6,72 v1.6 M1186.6,72 v1.6 M1189.6,72 v1.6 M1192.6,72 v1.6 M1195.6,72 v1.6 M1198.6,72 v1.6 M1201.6,72 v1.6" stroke="#a87c08" stroke-width=".8"/>
<rect x="1230.4" y="54.4" width="7.6" height="12" fill="#9ccc7c" stroke="#1c5c1c" stroke-width="1.1"/><rect x="1232.4" y="55" width="2.2" height="10.8" fill="#d4ecc4"/><path d="M1243.6,53.6 l-3.6,4 h2 l-1.6,3.4 l4.6,-4.6 h-2.2 l2,-2.8 z" fill="#f4d03c" stroke="#a88408" stroke-width=".5"/><path d="M1235.4,57.8 v9 l2.2,-2 l1.6,3.6 l1.6,-0.8 l-1.6,-3.4 h3 z" fill="#fff" stroke="#111" stroke-width=".9" stroke-linejoin="round"/>
<path d="M1234,87.6 A3.6,3.6 0 1 1 1232.6,81" fill="none" stroke="#444" stroke-width="1.2"/><rect x="1233.6" y="78.4" width="6.6" height="6.6" fill="#9ccc7c" stroke="#1c5c1c" stroke-width="1.1"/><path d="M1238.4,82.4 v9 l2.2,-2 l1.6,3.6 l1.6,-0.8 l-1.6,-3.4 h3 z" fill="#fff" stroke="#111" stroke-width=".9" stroke-linejoin="round"/>
<rect x="1232.4" y="102.4" width="10.4" height="13.4" rx="1.2" fill="#f4f4f4" stroke="#3a3a3a" stroke-width="1.1"/><rect x="1234" y="104" width="7.2" height="3" fill="#9a9a9a"/><path d="M1234.4,109.4 h1.4 M1236.9,109.4 h1.4 M1239.4,109.4 h1.4 M1234.4,111.6 h1.4 M1236.9,111.6 h1.4 M1239.4,111.6 h1.4 M1234.4,113.8 h1.4 M1236.9,113.8 h1.4 M1239.4,113.8 h1.4" stroke="#333" stroke-width="1.1"/>
<polygon points="1278.0,104.6 1283.0,104.6 1280.5,107.6" fill="#3a3a3a"/>
<defs><linearGradient id="gCB" x1="0" y1="0" x2="1" y2="0"><stop offset="0" stop-color="#8a8078"/><stop offset=".5" stop-color="#c8c0b8"/><stop offset="1" stop-color="#a09890"/></linearGradient></defs><rect x="1268.4" y="54.2" width="21.4" height="24" rx="1" fill="url(#gCB)" stroke="#3a3a3a" stroke-width="1.1"/><path d="M1273.6,55.8 C1273.6,51.2 1284.6,51.2 1284.6,55.8 Z" fill="#f4f4f4" stroke="#3a3a3a" stroke-width="1"/><path d="M1275.6,60.6 H1288.6 L1293,65 V81.4 H1275.6 Z" fill="url(#gG)" stroke="#3a3a3a" stroke-width="1.1" stroke-linejoin="round"/><path d="M1288.6,60.6 V65 H1293" fill="#fff" stroke="#3a3a3a" stroke-width=".9"/>
<path d="M1311.6,54.4 L1322.6,66.2 M1324.6,54.4 L1313.6,66.2" stroke="#3a3a3a" stroke-width="1.5" fill="none"/><ellipse cx="1313" cy="66.6" rx="2" ry="1.4" transform="rotate(-45 1313 66.6)" fill="#fff" stroke="#3a3a3a" stroke-width="1"/><ellipse cx="1323.2" cy="66.6" rx="2" ry="1.4" transform="rotate(45 1323.2 66.6)" fill="#fff" stroke="#3a3a3a" stroke-width="1"/><path d="M1312.4,55 L1317.6,61.6 L1318.8,60.6 Z M1323.8,55 L1318.6,61.6 L1317.4,60.6 Z" fill="#f4f4f4" stroke="#3a3a3a" stroke-width=".7"/>
<path d="M1317.6,77.6 H1310.6 V90.6 H1314" fill="#fff" stroke="#3a3a3a" stroke-width="1.1"/><path d="M1314.6,79.6 H1321.6 L1325.6,83.6 V92.6 H1314.6 Z" fill="url(#gG)" stroke="#3a3a3a" stroke-width="1.1" stroke-linejoin="round"/><path d="M1321.6,79.6 V83.6 H1325.6" fill="none" stroke="#3a3a3a" stroke-width=".9"/>
<rect x="1310.4" y="101.6" width="12" height="15" fill="#fbfbfb" stroke="#1c2c4c" stroke-width="1.1"/><rect x="1312.4" y="103.6" width="5" height="5" fill="#2c5a9c"/><rect x="1318.6" y="103.6" width="1.8" height="5" fill="#9cb8dc"/><path d="M1312.4,111 h6 M1312.4,113.4 h4" stroke="#9cb8dc" stroke-width="1"/><path d="M1319,114.6 L1324.6,109.8 L1326,111.4 L1321.6,116.8 Z" fill="#c89a4c" stroke="#6a4414" stroke-width=".6"/><path d="M1314.4,113.6 C1317,112.4 1320.4,113.4 1321.6,116.4 C1320,118.8 1316,118 1314.4,113.6 Z" fill="#b8641c" stroke="#5a2a0c" stroke-width=".6"/>
</svg>
<!-- ===== drawing canvas ===== -->
<div class="a" id="canvas"></div>
<div class="a" id="canvas-l"></div>
<div class="a" id="canvas-r"></div>
<svg id="drawing" style="left:0;top:0;will-change:transform" width="1366" height="728" viewBox="0 0 1366 728">
  <!-- building -->
  <polygon points="562,233.4 700.7,193.3 803.1,329.2 803.1,569 664.5,609.6 562,473.6" fill="#000"/>
  <polygon points="569.2,239.3 698.4,203 796,331.3 796,565.3 666,601.2 569.2,472.7" fill="#7ba3dc"/>
  <polygon points="569.2,239.3 666.4,367.8 666.4,601.2 569.2,472.7" fill="#066cb8"/>
  <polygon points="665.8,367.9 796,331.3 796,565.3 665.8,601.2" fill="#fff"/>
  <path d="M569.6,239.6 L666,367.6" stroke="#dff4ff" stroke-width=".9" fill="none"/>
  <polygon points="620.8,341.9 645,372.9 645,426.5 620.8,393.5" fill="#fff"/>
  <polygon points="712.1,379.8 775.8,363.3 775.8,415.7 712.1,432.6" fill="#7ba3dc"/>
  <polygon points="689.2,470 731.9,458.2 731.9,510.3 689.2,521.9" fill="#7ba3dc"/>
  <polygon points="754.3,525.2 775.8,520 775.8,571 754.3,577" fill="#7ba3dc"/>
  <!-- crosshair -->
  <g fill="#fff" shape-rendering="crispEdges">
    <rect x="891" y="294" width="69" height="1"/>
    <rect x="925" y="260" width="1" height="69"/>
  </g>
  <rect x="922.5" y="291.5" width="6" height="6" fill="none" stroke="#fff" stroke-width="1" shape-rendering="crispEdges"/>
  <!-- UCS icon -->
  <g fill="#fff" shape-rendering="crispEdges">
    <rect x="16" y="623" width="1" height="50"/>
    <rect x="17" y="673" width="50" height="1"/>
  </g>
  <rect x="12.5" y="668.5" width="9" height="9" fill="none" stroke="#fff" shape-rendering="crispEdges"/>
  <text x="24.6" y="619" text-anchor="middle" font-family="'DejaVu Sans Light','DejaVu Sans','Liberation Sans',sans-serif" font-weight="200" font-size="17.6" fill="#fff" transform="translate(24.6 0) scale(1.24 1) translate(-24.6 0)">Y</text>
  <text x="77.5" y="671.6" text-anchor="middle" font-family="'DejaVu Sans Light','DejaVu Sans','Liberation Sans',sans-serif" font-weight="200" font-size="16.6" fill="#fff" transform="translate(77.5 0) scale(1.3 1) translate(-77.5 0)">X</text>
</svg>
<span class="t" style="left:6.4px;top:156.4px;color:#e4e4e4;font-size:11.8px;letter-spacing:0.29px">[−][Top][2D Wireframe]</span>
<!-- viewport controls -->
<svg style="left:1300px;top:156px" width="60" height="16" viewBox="0 0 60 16">
  <rect x="4" y="9" width="9" height="3" fill="#f0f0f0"/>
  <path d="M24.5,7.5 h6 v6 h-6 z M26.5,7 v-2.5 h6 v6 h-2" fill="none" stroke="#f0f0f0" stroke-width="1.4"/>
  <path d="M44,4.5 l8,8 M52,4.5 l-8,8" stroke="#f0f0f0" stroke-width="2"/>
</svg>
<!-- ViewCube -->
<svg style="left:1250px;top:184px" width="104" height="104" viewBox="0 0 104 104">
  <circle cx="51" cy="52.5" r="41" fill="none" stroke="#4b5058" stroke-width="9.5"/>
  <rect x="31.5" y="32.3" width="39" height="39.4" fill="#b9b9b9"/>
  <rect x="39" y="40.5" width="24" height="24" fill="#a9a9a9"/>
</svg>
<span class="t" style="left:1293.2px;top:229.4px;font-size:10.4px;font-weight:bold;color:#555;line-height:12px;transform:scaleX(.84);transform-origin:0 0">TOP</span>
<span class="t" style="left:1294.6px;top:186px;font-size:16px;font-weight:bold;color:#c3c3c3;line-height:18px">N</span>
<span class="t" style="left:1295.6px;top:271px;font-size:16px;font-weight:bold;color:#c3c3c3;line-height:18px">S</span>
<span class="t" style="left:1251px;top:228px;font-size:16px;font-weight:bold;color:#c3c3c3;line-height:18px">W</span>
<span class="t" style="left:1337px;top:228px;font-size:16px;font-weight:bold;color:#c3c3c3;line-height:18px">E</span>
<div class="a" style="left:1277px;top:302px;width:48px;height:18px;background:linear-gradient(#b0b3bb,#999ca5);border-radius:4px;border:1px solid #7d8088"></div>
<span class="t" style="left:1282px;top:304px;font-size:11px;color:#4a4d55">WCS</span>
<i class="sarr" style="left:1310px;top:309px;border-top-color:#b8bbc2"></i>
<!-- navigation bar -->
<div class="a" style="left:1329px;top:345px;width:32px;height:212px;background:#62666c;border-radius:4px;border:1px solid #555960"></div>
<svg style="left:0;top:0" width="1366" height="728" viewBox="0 0 1366 728">
 <g fill="none" stroke="#4b4f55" stroke-width="1.1">
  <path d="M1333,350.5 h3 M1352,349.5 h5 M1352,351.5 h5"/>
  <circle cx="1345" cy="374" r="11"/><circle cx="1345" cy="374" r="7.4"/><circle cx="1345" cy="374" r="3.4"/>
  <path d="M1343,395 h4 M1343,460 h4 M1343,503 h4" stroke-width="1.6"/>
  <path d="M1339.6,419 V409.6 C1339.6,407.6 1342,407.6 1342,409.6 V407.6 C1342,405.6 1344.6,405.6 1344.6,407.6 V407 C1344.6,405 1347.2,405 1347.2,407.6 V409 C1347.2,407 1349.8,407.4 1349.8,409.6 V420 C1349.8,424 1347.6,427.6 1343.6,427.6 C1340.4,427.6 1338,424.6 1335.4,420.6 C1334.4,418.6 1336.6,417.4 1338,419 Z"/>
  <path d="M1334.6,436.6 L1347,449 M1347,436.6 L1334.6,449"/><circle cx="1349.6" cy="451.6" r="4.4"/>
  <ellipse cx="1345" cy="486" rx="10" ry="3.6"/><path d="M1343.4,476 V497 M1346.6,476 V497"/><circle cx="1345" cy="474.6" r="2.2"/>
  <path d="M1334.6,512.6 H1355.6 V520 H1334.6 Z M1340,512.6 V520 M1345,512.6 V520 M1350,512.6 V520 M1334.6,520 V535.6 H1349.6 V520"/>
  <path d="M1339.6,524.6 L1345.6,528 L1339.6,531.4 Z" fill="#4b4f55"/>
  <path d="M1353,547.6 h5 M1353,549.6 h5 M1354,551.6 h3"/>
 </g>
</svg>
<!-- ===== command line ===== -->
<div class="a" id="cmd-d"></div>
<div class="a" id="cmd-l"></div>
<span class="t" style="left:365.60px;top:666.6px;font-size:11.5px;line-height:14px;color:#7c7c7c;font-style:italic;font-family:'Liberation Mono',monospace">Type a command</span>
<!-- ===== layout tabs ===== -->
<div class="a" id="lay"></div>
<div class="a" id="layline"></div>
<div class="a" style="left:2px;top:688.6px;width:15px;height:15px;background:#f5f5f5;border:1px solid #b4b4b4"></div>
<div class="a" style="left:17px;top:688.6px;width:15px;height:15px;background:#f5f5f5;border:1px solid #b4b4b4"></div>
<div class="a" style="left:32px;top:688.6px;width:15px;height:15px;background:#f5f5f5;border:1px solid #b4b4b4"></div>
<div class="a" style="left:47px;top:688.6px;width:15px;height:15px;background:#f5f5f5;border:1px solid #b4b4b4"></div>
<span class="t" style="left:74.80px;top:690.3px;font-size:11px;line-height:13px;color:#f4f4f4;letter-spacing:-0.59px">Model</span>
<span class="t" style="left:120.60px;top:690.3px;font-size:11px;line-height:13px;color:#1a1a1a;letter-spacing:-0.46px">Layout1</span>
<span class="t" style="left:175.80px;top:690.3px;font-size:11px;line-height:13px;color:#1a1a1a;letter-spacing:-0.33px">Layout2</span>
<!-- ===== status bar ===== -->
<div class="a" id="status"></div>
<span class="t" style="left:12.80px;top:711.4px;font-size:11.4px;line-height:14px;color:#050505;letter-spacing:-0.31px">2076.1621, -1138.4861, 0.0000</span>
<div class="sb" style="left:197px"></div>
<div class="sb" style="left:219px"></div>
<div class="sb" style="left:241px"></div>
<div class="sb" style="left:263px"></div>
<div class="sb on" style="left:285px"></div>
<div class="sb on" style="left:307px"></div>
<div class="sb" style="left:329px"></div>
<div class="sb on" style="left:351px"></div>
<div class="sb" style="left:373px"></div>
<div class="sb on" style="left:395px"></div>
<div class="sb on" style="left:417px"></div>
<div class="sb on" style="left:439px"></div>
<div class="sb" style="left:461px"></div>
<div class="sb" style="left:483px"></div>
<div class="sb" style="left:505px"></div>
<div class="a" style="left:527px;top:706px;width:1px;height:22px;background:#555"></div>
<div class="sb" style="left:1013px;width:43px"></div>
<div class="sb" style="left:1057px;width:21px"></div>
<div class="sb" style="left:1079px;width:21px"></div>
<div class="sb" style="left:1113px;width:50px"></div>
<div class="sb" style="left:1164px;width:21px"></div>
<div class="sb" style="left:1186px;width:21px"></div>
<div class="sb" style="left:1214px;width:21px"></div>
<div class="sb" style="left:1236px;width:21px"></div>
<div class="sb" style="left:1258px;width:21px"></div>
<div class="sb" style="left:1332px;width:10px"></div>
<div class="sb" style="left:1343px;width:23px"></div>
<div class="a" style="left:1280px;top:707px;width:51px;height:21px;background:linear-gradient(90deg,#6e6e6e,#a8a8a8 30%,#b4b4b4 60%,#8a8a8a);border:1px solid #5a5a5a;border-bottom:none"></div>
<span class="t" style="left:1015.60px;top:710.8px;font-size:12px;line-height:14px;color:#0c0c0c;letter-spacing:-1.37px">MODEL</span>
<span class="t" style="left:1134.00px;top:710.8px;font-size:12px;line-height:14px;color:#0c0c0c;letter-spacing:-1px">1:1</span>
<svg id="svg-bot" style="left:0;top:0" width="1366" height="728" viewBox="0 0 1366 728">
<rect x="279" y="666" width="2" height="2" fill="#8c8c8c"/><rect x="282" y="666" width="2" height="2" fill="#8c8c8c"/><rect x="279" y="669" width="2" height="2" fill="#8c8c8c"/><rect x="282" y="669" width="2" height="2" fill="#8c8c8c"/><rect x="279" y="672" width="2" height="2" fill="#8c8c8c"/><rect x="282" y="672" width="2" height="2" fill="#8c8c8c"/><rect x="279" y="675" width="2" height="2" fill="#8c8c8c"/><rect x="282" y="675" width="2" height="2" fill="#8c8c8c"/><rect x="279" y="678" width="2" height="2" fill="#8c8c8c"/><rect x="282" y="678" width="2" height="2" fill="#8c8c8c"/><rect x="279" y="681" width="2" height="2" fill="#8c8c8c"/><rect x="282" y="681" width="2" height="2" fill="#8c8c8c"/>
<path d="M290.6,670.2 L298.6,678.2 M298.6,670.2 L290.6,678.2" stroke="#d8d8d8" stroke-width="1.7"/>
<path d="M314.2,667.6 C312,668 311,670.6 312.4,672.4 C313.4,673.4 314.8,673.6 315.8,673.2 L321.6,679.6 C322.6,680.6 324.4,679 323.4,678 L317.4,671.8 C317.8,670.6 317.6,669.2 316.6,668.2 L314.6,670.4 L313.4,669.6 Z" fill="#e4e4e4" stroke="#e4e4e4" stroke-width=".8" stroke-linejoin="round"/>
<rect x="334.5" y="667.5" width="14" height="13" rx="1" fill="#c4ccd4" stroke="#5a5a5a" stroke-width="1"/><path d="M337,670.6 L340.6,673.8 L337,677 M341.6,677.6 H345.6" stroke="#222" stroke-width="1.3" fill="none"/>
<polygon points="352.9,672.4 357.9,672.4 355.4,675.4" fill="#666"/>
<polygon points="1079,676 1087,676 1083,671.6" fill="#111"/>
<g fill="#7a7a7a"><rect x="6" y="692.4" width="1.4" height="8.4"/><polygon points="13,692.4 13,700.8 8,696.6"/><polygon points="28,692.4 28,700.8 23,696.6"/><polygon points="36,692.4 36,700.8 41,696.6"/><polygon points="51,692.4 51,700.8 56,696.6"/><rect x="56.6" y="692.4" width="1.4" height="8.4"/></g>
<polygon points="63.4,688.6 115.4,688.6 110.4,703 68.4,703" fill="#212830"/>
<polygon points="115.6,689 224.8,689 220.6,703.4 110.8,703.4" fill="#fafafa"/>
<path d="M115.4,689 L111,703.4 H166 M169.8,689 L166,703.4 H220.6 L224.8,689" stroke="#6a6a6a" stroke-width="1" fill="none"/>
<path d="M199,715.5 h13 M205.5,709 v13.6" stroke="#222" stroke-width="1.1"/><rect x="203.6" y="713.6" width="3.8" height="3.8" fill="none" stroke="#222" stroke-width=".9"/><path d="M211,722 l1.6,-2" stroke="#555" stroke-width=".8"/><rect x="211.4" y="717.4" width="3" height="3" fill="#fff" stroke="#444" stroke-width=".8"/><rect x="208.4" y="721.6" width="3" height="3" fill="#fff" stroke="#8a5a40" stroke-width=".8"/>
<rect x="223.80" y="711.80" width="1.2" height="1.2" fill="#222"/><rect x="226.86" y="711.80" width="1.2" height="1.2" fill="#222"/><rect x="229.92" y="711.80" width="1.2" height="1.2" fill="#222"/><rect x="232.98" y="711.80" width="1.2" height="1.2" fill="#222"/><rect x="223.80" y="714.80" width="1.2" height="1.2" fill="#222"/><rect x="226.86" y="714.80" width="1.2" height="1.2" fill="#222"/><rect x="229.92" y="714.80" width="1.2" height="1.2" fill="#222"/><rect x="223.80" y="717.80" width="1.2" height="1.2" fill="#222"/><rect x="226.86" y="717.80" width="1.2" height="1.2" fill="#222"/><rect x="229.92" y="717.80" width="1.2" height="1.2" fill="#222"/><rect x="223.8" y="720.8" width="1.2" height="1.2" fill="#222"/><rect x="233" y="720.8" width="1.2" height="1.2" fill="#222"/><path d="M226.4,721.4 h5.6" stroke="#222" stroke-width="1.3"/><path d="M233.6,714.4 v5.2" stroke="#222" stroke-width="1.3"/>
<rect x="243.2" y="709.2" width="15.6" height="15.6" rx="1.4" fill="#2e2e2e"/><rect x="244.2" y="710.2" width="1.8" height="1.8" fill="#fff"/><rect x="247.2" y="710.2" width="1.8" height="1.8" fill="#fff"/><rect x="250.2" y="710.2" width="1.8" height="1.8" fill="#fff"/><rect x="253.2" y="710.2" width="1.8" height="1.8" fill="#fff"/><rect x="256.2" y="710.2" width="1.8" height="1.8" fill="#fff"/><rect x="244.2" y="713.2" width="1.8" height="1.8" fill="#fff"/><rect x="247.2" y="713.2" width="1.8" height="1.8" fill="#fff"/><rect x="250.2" y="713.2" width="1.8" height="1.8" fill="#fff"/><rect x="253.2" y="713.2" width="1.8" height="1.8" fill="#fff"/><rect x="256.2" y="713.2" width="1.8" height="1.8" fill="#fff"/><rect x="244.2" y="716.2" width="1.8" height="1.8" fill="#fff"/><rect x="247.2" y="716.2" width="1.8" height="1.8" fill="#fff"/><rect x="250.2" y="716.2" width="1.8" height="1.8" fill="#fff"/><rect x="253.2" y="716.2" width="1.8" height="1.8" fill="#fff"/><rect x="256.2" y="716.2" width="1.8" height="1.8" fill="#fff"/><rect x="244.2" y="719.2" width="1.8" height="1.8" fill="#fff"/><rect x="247.2" y="719.2" width="1.8" height="1.8" fill="#fff"/><rect x="250.2" y="719.2" width="1.8" height="1.8" fill="#fff"/><rect x="253.2" y="719.2" width="1.8" height="1.8" fill="#fff"/><rect x="256.2" y="719.2" width="1.8" height="1.8" fill="#fff"/><rect x="244.2" y="722.2" width="1.8" height="1.8" fill="#fff"/><rect x="247.2" y="722.2" width="1.8" height="1.8" fill="#fff"/><rect x="250.2" y="722.2" width="1.8" height="1.8" fill="#fff"/><rect x="253.2" y="722.2" width="1.8" height="1.8" fill="#fff"/><rect x="256.2" y="722.2" width="1.8" height="1.8" fill="#fff"/>
<path d="M265.5,709 V724.4 H281" stroke="#3a3a3a" stroke-width="1.2" fill="none"/><path d="M265.5,718.6 h5.8 v5.8" stroke="#555" stroke-width=".9" fill="none"/>
<path d="M297,720.6 A4.2,4.2 0 1 1 294.6,714" fill="none" stroke="#2a5264" stroke-width="1.2"/><path d="M293,718.4 L300.4,711.6 M293,718.4 H301.4" stroke="#222" stroke-width="1.3" fill="none"/><path d="M297.4,718.2 A4.6,4.6 0 0 0 296.4,715.4" stroke="#222" stroke-width="1" fill="none"/>
<rect x="311.9" y="711.4" width="12.6" height="12.6" fill="#eaf4fa" stroke="#2a4a5a" stroke-width="1.2"/><circle cx="311.5" cy="710.6" r="1.8" fill="#fff" stroke="#c06030" stroke-width=".9"/>
<path d="M334.5,712 l3,-3 h10 v10 l-3,3 h-10 z" fill="#f2f2f2" stroke="#3a3a3a" stroke-width="1.1" stroke-linejoin="round"/><path d="M334.5,712 h10 v10 M344.5,712 l3,-3" fill="none" stroke="#bbb" stroke-width=".8"/><circle cx="333.9" cy="722" r="2" fill="#fff" stroke="#e07030" stroke-width="1"/>
<path d="M366.5,711.4 L356.5,720.6 H367.5" stroke="#222" stroke-width="1.3" fill="none"/><path d="M360.5,715.6 l3,1.4" stroke="#222" stroke-width="1"/>
<path d="M376.5,709 V723 H391.1" stroke="#3a3a3a" stroke-width="1.1" fill="none"/><path d="M376.5,707.6 l-2,3 h4 z M392.1,723 l-3,-2 v4 z" fill="#3a3a3a"/><path d="M377.5,722 L386.5,713" stroke="#3a3a3a" stroke-width="1"/><path d="M388.5,708.6 l-3.6,4.4 h2.6 l-1.4,3.6 l5,-5.4 h-2.6 l2,-2.6 z" fill="#f6c432" stroke="#b8860c" stroke-width=".5"/>
<path d="M399.5,716.4 h9 M403.5,712 v9" stroke="#222" stroke-width="1.5"/><rect x="405.9" y="718" width="6" height="2.8" fill="#fff" stroke="#222" stroke-width="1"/>
<path d="M421.5,716.6 h6" stroke="#111" stroke-width="2.6"/><path d="M427.5,716.6 h6 M427.5,711 v11.4" stroke="#111" stroke-width="1.2"/>
<rect x="442.1" y="709.6" width="14.8" height="14.8" rx="1" fill="#a8d0ec" stroke="#3a78a8" stroke-width="1.2"/><rect x="443.5" y="711" width="2" height="2" fill="#6aa8dc"/><rect x="447.5" y="711" width="2" height="2" fill="#6aa8dc"/><rect x="451.5" y="711" width="2" height="2" fill="#6aa8dc"/><rect x="445.5" y="713" width="2" height="2" fill="#6aa8dc"/><rect x="449.5" y="713" width="2" height="2" fill="#6aa8dc"/><rect x="453.5" y="713" width="2" height="2" fill="#6aa8dc"/><rect x="443.5" y="715" width="2" height="2" fill="#6aa8dc"/><rect x="447.5" y="715" width="2" height="2" fill="#6aa8dc"/><rect x="451.5" y="715" width="2" height="2" fill="#6aa8dc"/><rect x="445.5" y="717" width="2" height="2" fill="#6aa8dc"/><rect x="449.5" y="717" width="2" height="2" fill="#6aa8dc"/><rect x="453.5" y="717" width="2" height="2" fill="#6aa8dc"/><rect x="443.5" y="719" width="2" height="2" fill="#6aa8dc"/><rect x="447.5" y="719" width="2" height="2" fill="#6aa8dc"/><rect x="451.5" y="719" width="2" height="2" fill="#6aa8dc"/><rect x="445.5" y="721" width="2" height="2" fill="#6aa8dc"/><rect x="449.5" y="721" width="2" height="2" fill="#6aa8dc"/><rect x="453.5" y="721" width="2" height="2" fill="#6aa8dc"/>
<rect x="467.9" y="712" width="7.4" height="10" fill="#111"/><rect x="469.1" y="713.4" width="1.8" height="1.8" fill="#fff"/><rect x="471.90000000000003" y="713.4" width="1.8" height="1.8" fill="#fff"/><rect x="469.1" y="716.1999999999999" width="1.8" height="1.8" fill="#fff"/><rect x="471.90000000000003" y="716.1999999999999" width="1.8" height="1.8" fill="#fff"/><rect x="469.1" y="719.0" width="1.8" height="1.8" fill="#fff"/><rect x="471.90000000000003" y="719.0" width="1.8" height="1.8" fill="#fff"/>
<path d="M484.5,711 h7 M487.9,707.4 v7" stroke="#2a2a2a" stroke-width="1.1"/><rect x="490.1" y="713.4" width="7" height="7" rx="1" fill="#f0f0f0" stroke="#3a5a2a" stroke-width="1"/><rect x="492.9" y="716.4" width="7.6" height="7.6" rx="1" fill="#8cc060" stroke="#3a6a1a" stroke-width="1"/>
<path d="M512.9,709.4 h5.2 v5 h5 v5.2 h-5 v5 h-5.2 v-5 h-5 v-5.2 h5 z" fill="#f6f6f6" stroke="#2a2a2a" stroke-width="1.2" stroke-linejoin="round"/>
<rect x="1061.6" y="710.4" width="11" height="10.4" fill="#f4f4f4" stroke="#222" stroke-width="1.1"/><path d="M1064,712.6 V718.6 H1069.4 Z" fill="none" stroke="#222" stroke-width="1"/><path d="M1060,723.6 H1074.6" stroke="#3a3a3a" stroke-width="1.2"/>
<rect x="1082" y="710.6" width="6.6" height="7.4" rx=".6" fill="#f4f4f4" stroke="#222" stroke-width="1"/><rect x="1090" y="710.6" width="6.6" height="7.4" rx=".6" fill="#f4f4f4" stroke="#222" stroke-width="1"/><path d="M1082,714.6 h6.6 M1090,714.6 h6.6" stroke="#bbb" stroke-width="1"/><path d="M1082,722 H1096.6" stroke="#3a3a3a" stroke-width="2.2" stroke-linecap="round"/>
<path d="M1122.4,709.8 C1124.0,714.4 1126.4,720.4 1129.4,722.8 L1128.0,724.0 C1125.8000000000002,723.0 1123.8000000000002,721.4 1122.4,719.0 C1121.0,721.4 1119.0,723.0 1116.8000000000002,724.0 L1115.4,722.8 C1118.4,720.4 1120.8000000000002,714.4 1122.4,709.8 Z" fill="#fbfbfb" stroke="#2a2a2a" stroke-width="1" stroke-linejoin="round"/><polygon points="1151.1,713.6 1158.1,713.6 1154.6,717.6" fill="#111"/>
<path d="M1173.4,709.8 C1175.0,714.4 1177.4,720.4 1180.4,722.8 L1179.0,724.0 C1176.8000000000002,723.0 1174.8000000000002,721.4 1173.4,719.0 C1172.0,721.4 1170.0,723.0 1167.8000000000002,724.0 L1166.4,722.8 C1169.4,720.4 1171.8000000000002,714.4 1173.4,709.8 Z" fill="#fbfbfb" stroke="#2a2a2a" stroke-width="1" stroke-linejoin="round"/><path d="M1176,716.6 l4.6,-1 l2,4.6 l-4,2.6 l-3.6,-2.4 z" fill="#f8dc6a" stroke="#b08a1c" stroke-width=".6"/>
<path d="M1196,709.8 C1197.6,714.4 1200,720.4 1203,722.8 L1201.6,724.0 C1199.4,723.0 1197.4,721.4 1196,719.0 C1194.6,721.4 1192.6,723.0 1190.4,724.0 L1189,722.8 C1192,720.4 1194.4,714.4 1196,709.8 Z" fill="#c4c4c4" stroke="#9a9a9a" stroke-width="1" stroke-linejoin="round"/>
<polygon points="1231.65,715.52 1231.80,717.00 1229.69,718.09 1229.37,719.14 1230.52,721.22 1229.57,722.37 1227.31,721.66 1226.34,722.17 1225.68,724.45 1224.20,724.60 1223.11,722.49 1222.06,722.17 1219.98,723.32 1218.83,722.37 1219.54,720.11 1219.03,719.14 1216.75,718.48 1216.60,717.00 1218.71,715.91 1219.03,714.86 1217.88,712.78 1218.83,711.63 1221.09,712.34 1222.06,711.83 1222.72,709.55 1224.20,709.40 1225.29,711.51 1226.34,711.83 1228.42,710.68 1229.57,711.63 1228.86,713.89 1229.37,714.86" fill="#f6f6f6" stroke="#2a2a2a" stroke-width="1.1" stroke-linejoin="round"/><circle cx="1224.2" cy="717" r="2.8" fill="#aaa" stroke="#2a2a2a" stroke-width="1.1"/><polygon points="1232.6,720.6 1232.6,725 1228.2,725" fill="#111"/>
<path d="M1246.6,717.6 V714.6 C1246.6,710 1253.6,710 1253.6,714.6 V715.4" fill="none" stroke="#2a2a2a" stroke-width="2.4"/><path d="M1246.6,717.6 V714.6 C1246.6,710 1253.6,710 1253.6,714.6 V715.4" fill="none" stroke="#f4f4f4" stroke-width="1"/><rect x="1238.6" y="717" width="10.4" height="7.4" rx="1" fill="#f4f4f4" stroke="#2a2a2a" stroke-width="1.1"/><rect x="1243" y="718.6" width="1.6" height="4.2" fill="#2a2a2a"/>
<rect x="1260.6" y="711" width="11.6" height="7" rx="1" fill="#9aa2b4" stroke="#3a4258" stroke-width="1"/><path d="M1262.6,709.6 v1.6 M1265.6,709.6 v1.6 M1268.6,709.6 v1.6" stroke="#3a4258" stroke-width="1"/><path d="M1271.6,722.6 V720.4 C1269.4,719 1270,715 1272.8,715 C1275.6,715 1276.2,719 1274,720.4 V722.6 Z" fill="#f8e48a" stroke="#b08a1c" stroke-width=".8"/><rect x="1271.8" y="722.4" width="2" height="2.6" fill="#f0f0f0" stroke="#777" stroke-width=".5"/>
<rect x="1285.6" y="711" width="9" height="6.6" fill="#2a5aa8" stroke="#16306a" stroke-width=".8"/><path d="M1288,713.6 h5" stroke="#fff" stroke-width="1"/><circle cx="1288" cy="713.6" r="1.4" fill="#fff"/><rect x="1285.6" y="718" width="8" height="5.6" fill="#e8cc3c" stroke="#8a7410" stroke-width=".7"/><path d="M1296.6,716.6 L1301.4,724.6 H1291.8 Z" fill="#f8dc28" stroke="#222" stroke-width=".9" stroke-linejoin="round"/><path d="M1296.6,719.4 v2.6 M1296.6,723 v.8" stroke="#111" stroke-width="1.1"/>
<path d="M1312.4,722 V720 C1309.6,718.4 1309.2,711.4 1313.6,711.4 C1318,711.4 1317.6,718.4 1314.8,720 V722 Z" fill="#f8eaa8" stroke="#8a7a3a" stroke-width=".9"/><rect x="1312.4" y="722" width="2.4" height="3" fill="#f4f4f4" stroke="#555" stroke-width=".6"/>
<polygon points="1334.4,716.6 1340.4,716.6 1337.4,721.0" fill="#111"/>
<rect x="1347" y="710.6" width="13.6" height="12.4" fill="#f4f4f4" stroke="#2a2a2a" stroke-width="1.1"/><rect x="1347.4" y="711" width="12.8" height="2.2" fill="#3a3a3a"/>
</svg>
</body>
</html>
